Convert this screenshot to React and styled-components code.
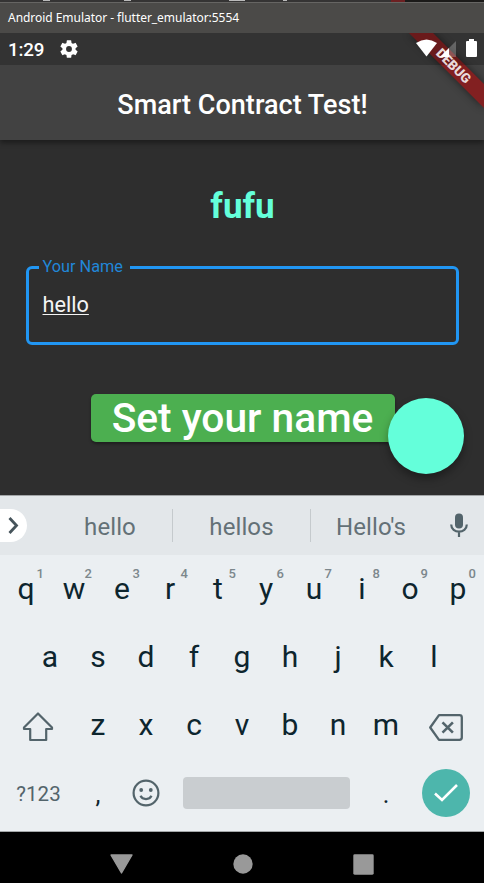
import React from "react";
import styled, { createGlobalStyle } from "styled-components";

const GlobalStyle = createGlobalStyle`
  * { box-sizing: border-box; }
  body { margin: 0; background: #000; font-family: Roboto, sans-serif; }
`;

const Screen = styled.div`
  width: 484px;
  height: 883px;
  overflow: hidden;
  display: flex;
  flex-direction: column;
  background: #2e2e2e;
`;

const WindowEdge = styled.div`
  height: 3px;
  flex: none;
  background:
    linear-gradient(#bbb, #bbb) 43px 0 / 7px 1px no-repeat,
    linear-gradient(#bbb, #bbb) 124px 0 / 7px 1px no-repeat,
    linear-gradient(#bbb, #bbb) 229px 0 / 16px 1px no-repeat,
    linear-gradient(#bbb, #bbb) 283px 0 / 4px 1px no-repeat,
    linear-gradient(90deg, #353434 0 391px, #6d2022 391px 405px, #1b1a19 405px);
  border-bottom: 1px solid #666563;
`;

const WindowTitle = styled.div`
  height: 30px;
  flex: none;
  padding-left: 8px;
  background: #4b4a48;
  color: #fff;
  font: 12px/29px "Noto Sans", sans-serif;
  letter-spacing: -0.04px;
  white-space: pre;
`;

const StatusBar = styled.div`
  position: relative;
  height: 32px;
  flex: none;
  display: flex;
  align-items: center;
  padding: 0 7px 0 8px;
  background: #333;
  color: #fff;
`;

const Clock = styled.span`
  width: 50px;
  padding-top: 1px;
  font-size: 18.8px;
  font-weight: 500;
  line-height: 32px;
  letter-spacing: -0.15px;
`;

const StatusIcons = styled.div`
  position: relative;
  z-index: 2;
  margin-left: auto;
  display: flex;
`;

const Banner = styled.svg`
  position: absolute;
  z-index: 1;
  right: 0;
  top: 0;
  pointer-events: none;
`;

const AppBar = styled.header`
  height: 75px;
  flex: none;
  display: flex;
  align-items: center;
  justify-content: center;
  padding: 4px 0 0 1px;
  background: #424242;
  box-shadow: 0 3px 5px rgba(0, 0, 0, 0.38);
  color: #fff;
  font-size: 27px;
  font-weight: 500;
  letter-spacing: 0.03px;
`;

const Content = styled.main`
  height: 355px;
  flex: none;
  display: flex;
  flex-direction: column;
  align-items: center;
  position: relative;
`;

const Greeting = styled.h1`
  margin: 46px 0 38px 1px;
  height: 42px;
  color: #64ffda;
  font-size: 35px;
  font-weight: 700;
  line-height: 42px;
`;

const Field = styled.fieldset`
  width: 433px;
  height: 88px;
  margin: -9px 0 0;
  padding: 15px 13px 0 14px;
  border: 3px solid #2196f3;
  border-radius: 6px;
  color: #fff;
`;

const FieldLabel = styled.legend`
  margin-left: -4px;
  padding: 0 7px 0 4px;
  height: 20px;
  color: #2187d8;
  font-size: 16.3px;
  line-height: 20px;
`;

const FieldValue = styled.span`
  display: inline-block;
  height: 26px;
  color: #f4f4f4;
  font-size: 21.7px;
  line-height: 26px;
  text-decoration: underline;
  text-decoration-thickness: 1px;
  text-underline-offset: 2px;
`;

const SetButton = styled.button`
  width: 304px;
  height: 48px;
  margin: 49px 0 0 1px;
  padding: 0;
  border: 0;
  border-radius: 5px;
  background: #4caf50;
  box-shadow: 0 2px 3px rgba(0, 0, 0, 0.35);
  color: #fff;
  font: 500 40.7px/49px Roboto, sans-serif;
  white-space: nowrap;
`;

const FloatingButton = styled.button`
  position: absolute;
  right: 20px;
  bottom: 21px;
  width: 76px;
  height: 76px;
  padding: 0;
  border: 0;
  border-radius: 50%;
  background: #64ffda;
  box-shadow: 0 5px 8px rgba(0, 0, 0, 0.35);
`;

const Keyboard = styled.section`
  height: 337px;
  flex: none;
  background: #ebeff2;
  border-bottom: 1px solid #a3a7a8;
`;

const Suggestions = styled.div`
  height: 60px;
  display: flex;
  align-items: center;
  background: #e3e7ea;
  border-top: 1px solid #a2a5a7;
`;

const Expand = styled.div`
  width: 27px;
  height: 33px;
  margin-right: 21px;
  display: flex;
  align-items: center;
  border-radius: 0 17px 17px 0;
  background: #fff;
`;

const Suggestion = styled.div`
  width: ${(p) => p.$width}px;
  height: 33px;
  border-right: ${(p) => (p.$last ? "0" : "1px solid #c5cacd")};
  color: #647177;
  font-size: 24px;
  line-height: 36px;
  text-align: center;
  letter-spacing: 0.1px;
`;

const MicSlot = styled.div`
  margin-left: auto;
  width: 50px;
  display: flex;
  justify-content: center;
`;

const KeyRow = styled.div`
  height: 68px;
  display: flex;
  justify-content: center;
`;

const Key = styled.div`
  position: relative;
  width: ${(p) => p.$width || 48}px;
  height: 68px;
  display: flex;
  align-items: center;
  justify-content: center;
  padding-top: ${(p) => p.$drop || 0}px;
  color: #0d252e;
  font-size: ${(p) => p.$size || 30}px;
  line-height: 68px;
`;

const KeyHint = styled.sup`
  position: absolute;
  left: 34.5px;
  top: 11px;
  color: #7c878c;
  font-size: 13px;
  font-weight: 500;
  line-height: 16px;
`;

const SymbolLabel = styled.span`
  padding: 1px 0 0 1px;
  color: #53646b;
  font-size: 20.5px;
  letter-spacing: 0.1px;
`;

const SpaceBar = styled.div`
  width: 167px;
  height: 32px;
  border-radius: 4px;
  background: #c9cdd0;
`;

const Enter = styled.div`
  width: 48px;
  height: 48px;
  display: flex;
  align-items: center;
  justify-content: center;
  border-radius: 50%;
  background: #4db6ac;
`;

const NavBar = styled.nav`
  height: 51px;
  flex: none;
  display: flex;
  align-items: center;
  justify-content: center;
  padding-top: 13px;
  gap: 100px;
  background: #000;
`;

const Icon = styled.svg`
  display: block;
  flex: none;
  overflow: visible;
`;

const topRow = "qwertyuiop".split("");

export default function App() {
  return (
    <>
      <GlobalStyle />
      <Screen>
        <WindowEdge />
        <WindowTitle>Android Emulator - flutter_emulator:5554</WindowTitle>
        <StatusBar>
          <Clock>1:29</Clock>
          <Icon width="22" height="22" viewBox="0 0 24 24" fill="#fff">
            <path d="M19.14 12.94c.04-.3.06-.61.06-.94s-.02-.64-.07-.94l2.03-1.58a.49.49 0 0 0 .12-.61l-1.92-3.32a.49.49 0 0 0-.59-.22l-2.39.96a7 7 0 0 0-1.62-.94l-.36-2.54A.48.48 0 0 0 13.92 2.4h-3.84a.48.48 0 0 0-.48.41l-.36 2.54a7.3 7.3 0 0 0-1.62.94l-2.39-.96a.48.48 0 0 0-.59.22L2.72 8.87a.47.47 0 0 0 .12.61l2.03 1.58a6.7 6.7 0 0 0 0 1.88l-2.03 1.58a.49.49 0 0 0-.12.61l1.92 3.32c.12.22.37.29.59.22l2.39-.96c.5.38 1.03.7 1.62.94l.36 2.54c.05.24.25.41.48.41h3.84c.24 0 .45-.17.48-.41l.36-2.54a7 7 0 0 0 1.62-.94l2.39.96c.22.08.47 0 .59-.22l1.92-3.32a.47.47 0 0 0-.12-.61zM12 15.2a3.2 3.2 0 1 1 0-6.4 3.2 3.2 0 0 1 0 6.4z" />
          </Icon>
          <Banner width="90" height="100" viewBox="394 33 90 100">
            <defs>
              <filter id="soft" x="-30%" y="-30%" width="160%" height="160%">
                <feGaussianBlur stdDeviation="4" />
              </filter>
            </defs>
            <path d="M409 33H433L484 84V108Z" fill="#000" opacity=".5" filter="url(#soft)" />
            <path d="M409 33H433L484 84V108Z" fill="#822021" />
            <path d="M409 33H433L465 65H441Z" fill="#000" opacity=".18" />
            <text
              x="453.5"
              y="70.5"
              transform="rotate(45 453.5 66)"
              textAnchor="middle"
              fontFamily="Roboto, sans-serif"
              fontWeight="900"
              fontSize="13.4"
              fill="#e9dada"
            >
              DEBUG
            </text>
          </Banner>
          <StatusIcons>
            <Icon width="61" height="20" viewBox="416 39 61 20">
              <path d="M416 43Q426.5 36 437 43L426.5 56.5Z" fill="#fff" />
              <path d="M440 57L456 41V57Z" fill="#fff" opacity=".25" />
              <path d="M440 57L449 48V57Z" fill="#fff" />
              <path d="M469 39h5v2h2q1 0 1 1v14q0 1-1 1h-9q-1 0-1-1V42q0-1 1-1h2Z" fill="#fff" />
            </Icon>
          </StatusIcons>
        </StatusBar>
        <AppBar>Smart Contract Test!</AppBar>
        <Content>
          <Greeting>fufu</Greeting>
          <Field>
            <FieldLabel>Your Name</FieldLabel>
            <FieldValue>hello</FieldValue>
          </Field>
          <SetButton>Set your name</SetButton>
          <FloatingButton aria-label="Add" />
        </Content>
        <Keyboard>
          <Suggestions>
            <Expand>
              <Icon width="27" height="33" viewBox="0 0 27 33" fill="none" stroke="#46545b" strokeWidth="2.8">
                <path d="M9.5 9L16.5 16.5L9.5 24" />
              </Icon>
            </Expand>
            <Suggestion $width={125}>hello</Suggestion>
            <Suggestion $width={138}>hellos</Suggestion>
            <Suggestion $width={120} $last>Hello's</Suggestion>
            <MicSlot>
              <Icon width="18" height="25" viewBox="0 0 18 25">
                <rect x="5" y="0.5" width="8" height="15" rx="4" fill="#53646b" />
                <path d="M1.2 11.5c0 9.4 15.6 9.4 15.6 0M9 18.5v5.5" fill="none" stroke="#53646b" strokeWidth="2.2" />
              </Icon>
            </MicSlot>
          </Suggestions>
          <KeyRow>
            {topRow.map((letter, i) => (
              <Key key={letter}>
                {letter}
                <KeyHint>{(i + 1) % 10}</KeyHint>
              </Key>
            ))}
          </KeyRow>
          <KeyRow>
            {"asdfghjkl".split("").map((letter) => (
              <Key key={letter}>{letter}</Key>
            ))}
          </KeyRow>
          <KeyRow>
            <Key $width={72} $drop={3}>
              <Icon width="32" height="30" viewBox="0 0 32 30" fill="none" stroke="#53646b" strokeWidth="2.2" strokeLinejoin="round">
                <path d="M16 1.5L30 15.5V17H24.2V28H8.2V17H2V15.5Z" />
              </Icon>
            </Key>
            {"zxcvbnm".split("").map((letter) => (
              <Key key={letter}>{letter}</Key>
            ))}
            <Key $width={72} $drop={5}>
              <Icon width="34" height="27" viewBox="0 0 34 27" fill="none" stroke="#53646b" strokeWidth="2.3" strokeLinejoin="round">
                <path d="M10 1.2H30.5Q32.8 1.2 32.8 3.5V23.5Q32.8 25.8 30.5 25.8H10L1.2 13.5Z" />
                <path d="M13.5 8.3l10.4 10.4M23.9 8.3L13.5 18.7" strokeWidth="2.6" />
              </Icon>
            </Key>
          </KeyRow>
          <KeyRow>
            <Key $width={72}>
              <SymbolLabel>?123</SymbolLabel>
            </Key>
            <Key $size={25} $drop={3}>,</Key>
            <Key>
              <Icon width="28" height="28" viewBox="0 0 28 28">
                <circle cx="14" cy="14" r="12.4" fill="none" stroke="#53646b" strokeWidth="2.2" />
                <circle cx="9.2" cy="11" r="1.9" fill="#53646b" />
                <circle cx="18.8" cy="11" r="1.9" fill="#53646b" />
                <path d="M8.5 16.8c2 4.3 9 4.3 11 0" fill="none" stroke="#53646b" strokeWidth="2.2" />
              </Icon>
            </Key>
            <Key $width={192}>
              <SpaceBar />
            </Key>
            <Key $size={25} $drop={3}>.</Key>
            <Key $width={72}>
              <Enter>
                <Icon width="24" height="18" viewBox="0 0 24 18" fill="none" stroke="#fff" strokeWidth="2.6">
                  <path d="M1 9.5L8 16L23 1" />
                </Icon>
              </Enter>
            </Key>
          </KeyRow>
        </Keyboard>
        <NavBar>
          <Icon width="23" height="20" viewBox="0 0 23 20">
            <path d="M1 1H22L11.5 19Z" fill="#999" stroke="#999" strokeWidth="1.4" strokeLinejoin="round" />
          </Icon>
          <Icon width="20" height="20" viewBox="0 0 20 20">
            <circle cx="10" cy="10" r="9.7" fill="#999" />
          </Icon>
          <Icon width="21" height="21" viewBox="0 0 21 21">
            <rect x="0.3" y="0.3" width="20.4" height="20.4" rx="1.4" fill="#999" />
          </Icon>
        </NavBar>
      </Screen>
    </>
  );
}
